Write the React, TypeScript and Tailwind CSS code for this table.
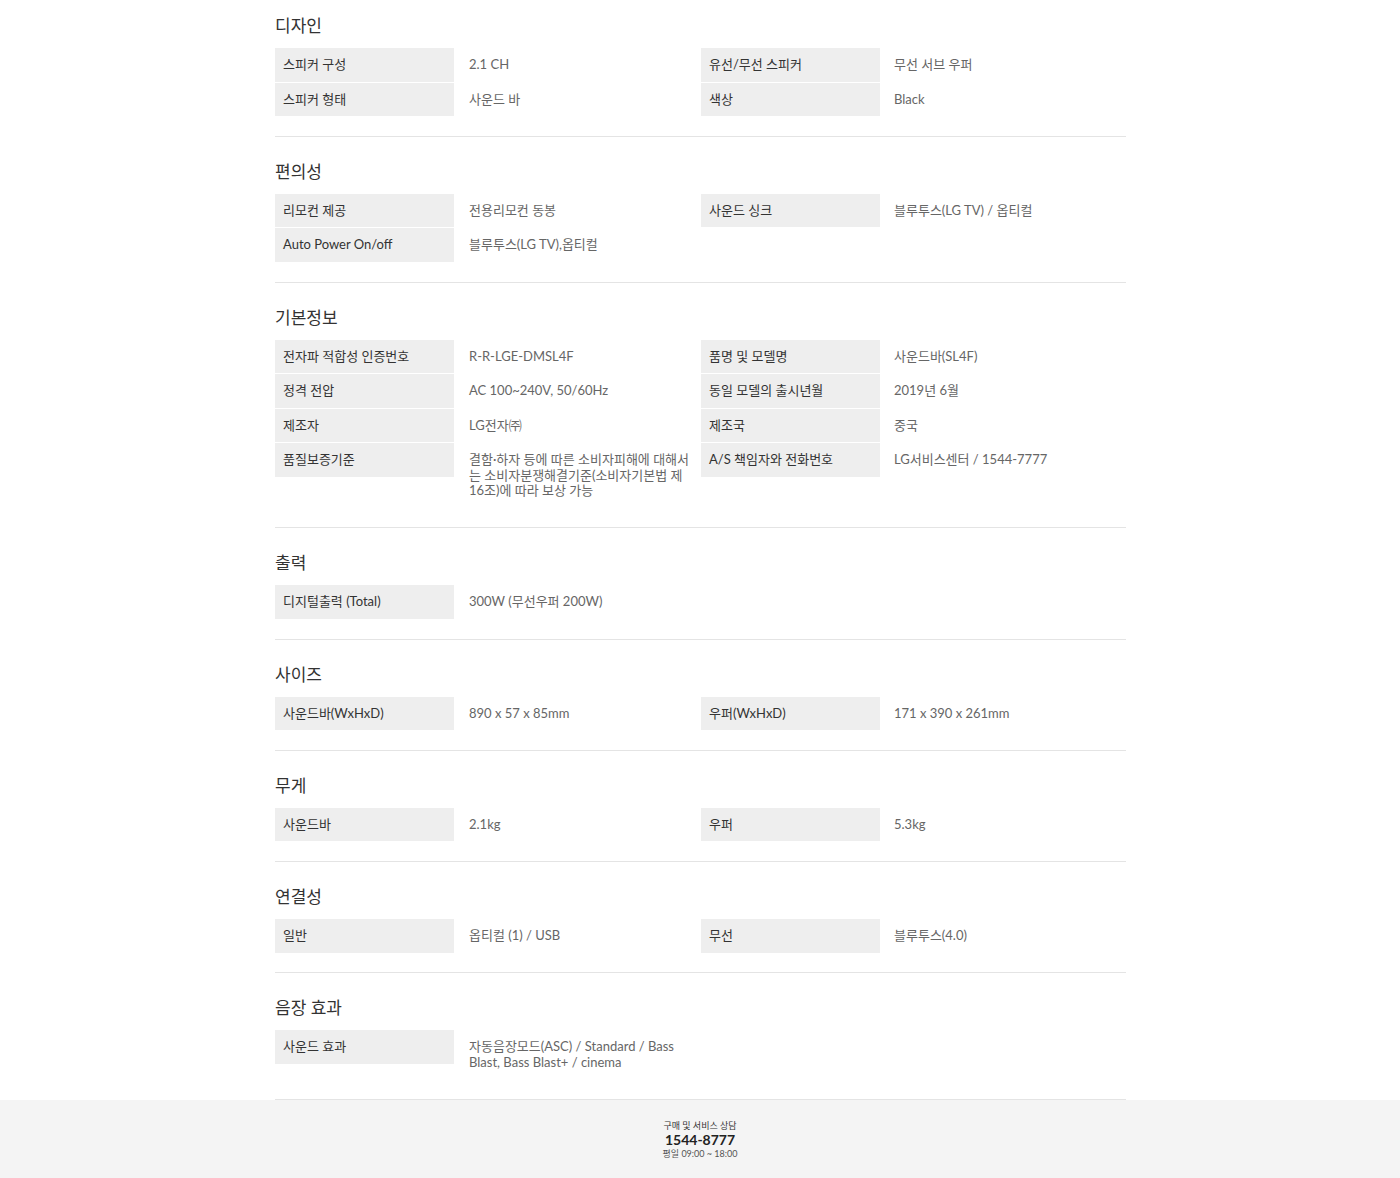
import React from "react";

type Cell = [string, React.ReactNode] | null;
type Row = [Cell, Cell];
type Section = { title: string; rows: Row[] };

const sections: Section[] = [
  {
    title: "디자인",
    rows: [
      [["스피커 구성", "2.1 CH"], ["유선/무선 스피커", "무선 서브 우퍼"]],
      [["스피커 형태", "사운드 바"], ["색상", "Black"]],
    ],
  },
  {
    title: "편의성",
    rows: [
      [["리모컨 제공", "전용리모컨 동봉"], ["사운드 싱크", "블루투스(LG TV) / 옵티컬"]],
      [["Auto Power On/off", "블루투스(LG TV),옵티컬"], null],
    ],
  },
  {
    title: "기본정보",
    rows: [
      [["전자파 적합성 인증번호", "R-R-LGE-DMSL4F"], ["품명 및 모델명", "사운드바(SL4F)"]],
      [["정격 전압", "AC 100~240V, 50/60Hz"], ["동일 모델의 출시년월", "2019년 6월"]],
      [["제조자", "LG전자㈜"], ["제조국", "중국"]],
      [
        [
          "품질보증기준",
          <>
            결함·하자 등에 따른 소비자피해에 대해서
            <br />
            는 소비자분쟁해결기준(소비자기본법 제
            <br />
            16조)에 따라 보상 가능
          </>,
        ],
        ["A/S 책임자와 전화번호", "LG서비스센터 / 1544-7777"],
      ],
    ],
  },
  {
    title: "출력",
    rows: [[["디지털출력 (Total)", "300W (무선우퍼 200W)"], null]],
  },
  {
    title: "사이즈",
    rows: [[["사운드바(WxHxD)", "890 x 57 x 85mm"], ["우퍼(WxHxD)", "171 x 390 x 261mm"]]],
  },
  {
    title: "무게",
    rows: [[["사운드바", "2.1kg"], ["우퍼", "5.3kg"]]],
  },
  {
    title: "연결성",
    rows: [[["일반", "옵티컬 (1) / USB"], ["무선", "블루투스(4.0)"]]],
  },
  {
    title: "음장 효과",
    rows: [
      [
        [
          "사운드 효과",
          <>
            자동음장모드(ASC) / Standard / Bass
            <br />
            Blast, Bass Blast+ / cinema
          </>,
        ],
        null,
      ],
    ],
  },
];

const font = { fontFamily: 'Lato, "Noto Sans CJK KR", "Noto Sans", sans-serif' };

function Pair({ cell, right }: { cell: Cell; right?: boolean }) {
  if (!cell) {
    return (
      <>
        <div />
        <div />
      </>
    );
  }
  return (
    <>
      <div className="bg-[#eeeeee] px-[8px] py-[9px] text-[13px] leading-[15.5px] text-[#333] whitespace-nowrap">
        {cell[0]}
      </div>
      <div
        className={
          right
            ? "pl-[14px] pr-[6px] py-[9px] text-[13px] leading-[15.5px] text-[#666] whitespace-nowrap"
            : "pl-[15px] pr-[4px] py-[9px] text-[13px] leading-[15.5px] text-[#666] whitespace-nowrap"
        }
      >
        {cell[1]}
      </div>
    </>
  );
}

export default function App() {
  return (
    <div className="min-h-screen bg-white" style={font}>
      <div className="ml-[275px] w-[851px]">
        {sections.map((s, i) => (
          <div
            key={s.title}
            className={
              i === 0
                ? "pt-[14px] pb-[19.75px] border-b border-[#e4e4e4]"
                : "pt-[23px] pb-[19.75px] border-b border-[#e4e4e4]"
            }
          >
            <h2 className="h-[24px] text-[17px] leading-[24px] text-[#333] mb-[10px]">{s.title}</h2>
            <div className="flex flex-col gap-px">
              {s.rows.map((r, j) => (
                <div key={j} className="grid grid-cols-[179px_247px_179px_1fr] items-start">
                  <Pair cell={r[0]} />
                  <Pair cell={r[1]} right />
                </div>
              ))}
            </div>
          </div>
        ))}
      </div>
      <div className="bg-[#f4f4f4] h-[78px] flex flex-col items-center pt-[20px]">
        <div className="text-[9px] leading-[12px] text-[#333]">구매 및 서비스 상담</div>
        <div className="text-[14px] leading-[16px] font-bold text-[#222]">1544-8777</div>
        <div className="text-[9px] leading-[12px] text-[#555]">평일 09:00 ~ 18:00</div>
      </div>
    </div>
  );
}
